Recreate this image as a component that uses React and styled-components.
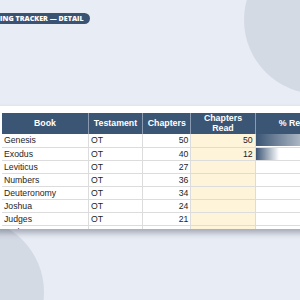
import React from 'react';
import styled, { createGlobalStyle } from 'styled-components';

const Global = createGlobalStyle`
  html, body { margin: 0; padding: 0; }
  body { background: #e8ecf4; font-family: "Liberation Sans", Arial, sans-serif; }
`;

const Stage = styled.div`
  position: relative;
  width: 300px;
  height: 300px;
  overflow: hidden;
  background: #e8ecf4;
  display: flex;
  flex-direction: column;
  align-items: flex-start;
  padding-top: 13px;
  box-sizing: border-box;
`;

const Blob = styled.div`
  position: absolute;
  left: ${(p) => p.$x}px;
  top: ${(p) => p.$y}px;
  width: ${(p) => p.$size}px;
  height: ${(p) => p.$size}px;
  border-radius: 50%;
  background: #d4dae4;
`;

const Badge = styled.div`
  position: relative;
  z-index: 1;
  margin-left: -27px;
  height: 11px;
  padding: 0 6px 0 8px;
  border-radius: 6px;
  background: #3b5372;
  color: #fff;
  font-family: "Open Sans", "DejaVu Sans", sans-serif;
  font-weight: 800;
  font-size: 7.1px;
  line-height: 11px;
  letter-spacing: 0;
  white-space: nowrap;
`;

const Panel = styled.section`
  position: relative;
  z-index: 1;
  margin-top: 82px;
  margin-left: -6px;
  width: 360px;
  height: 123px;
  background: #fff;
  overflow: hidden;
  box-shadow: 0 4px 6px rgba(20, 30, 50, 0.32);
  padding: 7px 0 0 8px;
  box-sizing: border-box;
`;

const Grid = styled.table`
  border-collapse: collapse;
  table-layout: fixed;
  width: 332px;
  font-family: "Liberation Sans", Arial, sans-serif;
`;

const HeadCell = styled.th`
  background: #3b5574;
  color: #fff;
  font-weight: 700;
  font-size: 8.8px;
  line-height: 9.6px;
  height: 21px;
  padding: 0 2px;
  text-align: center;
  border-left: 1px solid #8a9ab0;
  &:first-child { border-left: none; }
`;

const Cell = styled.td`
  height: 13px;
  box-sizing: border-box;
  padding: 0 2px;
  font-size: 8.7px;
  line-height: 12px;
  color: #1e1e1e;
  text-align: ${(p) => (p.$num ? 'right' : 'left')};
  background: ${(p) => (p.$input ? '#fdf4d9' : '#fff')};
  border-bottom: 1px solid #dcdcdc;
  border-right: 1px solid #dcdcdc;
  white-space: nowrap;
  overflow: hidden;
`;

const BarCell = styled(Cell)`
  padding: 0;
`;

const Bar = styled.div`
  height: 12px;
  background: linear-gradient(to right, #3b5574, #ffffff);
`;

const books = [
  ['Genesis', 'OT', 50, 50],
  ['Exodus', 'OT', 40, 12],
  ['Leviticus', 'OT', 27, null],
  ['Numbers', 'OT', 36, null],
  ['Deuteronomy', 'OT', 34, null],
  ['Joshua', 'OT', 24, null],
  ['Judges', 'OT', 21, null],
  ['Ruth', 'OT', 4, null],
  ['1 Samuel', 'OT', 31, null],
];

export default function App() {
  return (
    <>
      <Global />
      <Stage>
        <Blob $x={244} $y={-54} $size={148} />
        <Blob $x={-104} $y={218} $size={148} />
        <Badge>READING TRACKER — DETAIL</Badge>
        <Panel>
          <Grid>
            <colgroup>
              <col style={{ width: 86 }} />
              <col style={{ width: 54 }} />
              <col style={{ width: 48 }} />
              <col style={{ width: 64 }} />
              <col style={{ width: 78 }} />
            </colgroup>
            <thead>
              <tr>
                <HeadCell>Book</HeadCell>
                <HeadCell>Testament</HeadCell>
                <HeadCell>Chapters</HeadCell>
                <HeadCell>Chapters<br />Read</HeadCell>
                <HeadCell>% Read</HeadCell>
              </tr>
            </thead>
            <tbody>
              {books.map(([name, t, ch, read]) => (
                <tr key={name}>
                  <Cell>{name}</Cell>
                  <Cell>{t}</Cell>
                  <Cell $num>{ch}</Cell>
                  <Cell $num $input>{read ?? ''}</Cell>
                  <BarCell>
                    {read != null && <Bar style={{ width: `${(read / ch) * 100}%` }} />}
                  </BarCell>
                </tr>
              ))}
            </tbody>
          </Grid>
        </Panel>
      </Stage>
    </>
  );
}
